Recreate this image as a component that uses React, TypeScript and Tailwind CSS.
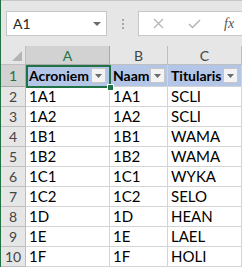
import React from "react";

const rows: [string, string, string][] = [
  ["1A1", "1A1", "SCLI"],
  ["1A2", "1A2", "SCLI"],
  ["1B1", "1B1", "WAMA"],
  ["1B2", "1B2", "WAMA"],
  ["1C1", "1C1", "WYKA"],
  ["1C2", "1C2", "SELO"],
  ["1D", "1D", "HEAN"],
  ["1E", "1E", "LAEL"],
  ["1F", "1F", "HOLI"],
];

function FilterBtn() {
  return (
    <div className="w-[15px] h-[15px] bg-[#f3f3f3] border border-[#c6c6c6] flex items-center justify-center shrink-0">
      <svg width="7" height="4" viewBox="0 0 7 4">
        <path d="M0 0 L7 0 L3.5 4 Z" fill="#6b6b6b" />
      </svg>
    </div>
  );
}

export default function App() {
  return (
    <div className="w-[242px] h-[267px] overflow-hidden flex bg-[#e6e6e6] font-['Lato',sans-serif] text-[15px] text-black">
      <div className="w-[1px] bg-[#217346] shrink-0" />
      <div className="flex-1 flex flex-col min-w-0">
        {/* top bar */}
        <div className="h-[46px] shrink-0 border-t border-[#c6c6c6] flex items-start pt-[10px]">
          <div className="ml-[5px] w-[101px] h-[25px] bg-white border border-[#c6c6c6] flex items-center justify-between pl-[6px] pr-[5px]">
            <span className="text-[14px] text-[#262626] font-['Lato',sans-serif]">A1</span>
            <svg width="8" height="4" viewBox="0 0 8 4">
              <path d="M0 0 L8 0 L4 4 Z" fill="#6b6b6b" />
            </svg>
          </div>
          <div className="w-[31px] h-[25px] flex flex-col items-center justify-center gap-[2px]">
            <div className="w-[2px] h-[2px] bg-[#a8a8a8]" />
            <div className="w-[2px] h-[2px] bg-[#a8a8a8]" />
            <div className="w-[2px] h-[2px] bg-[#a8a8a8]" />
          </div>
          <div className="flex-1 h-[25px] bg-white border border-[#c6c6c6] border-r-0 flex items-center">
            <svg className="ml-[14px]" width="11" height="11" viewBox="0 0 11 11">
              <path d="M1 1 L10 10 M10 1 L1 10" stroke="#b5b5b5" strokeWidth="1.3" />
            </svg>
            <svg className="ml-[24px]" width="13" height="10" viewBox="0 0 13 10">
              <path d="M1 5 L4.5 8.5 L12 1" stroke="#b5b5b5" strokeWidth="1.5" fill="none" />
            </svg>
            <span className="ml-[23px] text-[14px] italic text-[#555] font-['Liberation_Serif',serif]">fx</span>
          </div>
        </div>

        {/* grid */}
        <div className="relative grid grid-cols-[25px_84px_58px_74px] grid-rows-[19px_22px_repeat(9,20px)] bg-white">
          {/* corner */}
          <div className="bg-[#e6e6e6] border-r border-b border-[#bfbfbf] flex items-end justify-end p-[3px]">
            <svg width="10" height="10" viewBox="0 0 10 10">
              <path d="M10 0 L10 10 L0 10 Z" fill="#b4b4b4" />
            </svg>
          </div>
          <div className="bg-[#d2d2d2] border-r border-b border-[#ababab] flex items-center justify-center text-[14px] text-[#217346]">A</div>
          <div className="bg-[#e6e6e6] border-r border-b border-[#bfbfbf] flex items-center justify-center text-[14px] text-[#444]">B</div>
          <div className="bg-[#e6e6e6] border-r border-b border-[#bfbfbf] flex items-center justify-center text-[14px] text-[#444]">C</div>

          {/* header row 1 */}
          <div className="bg-[#d2d2d2] border-r border-b border-[#ababab] flex items-center justify-center text-[14px] text-[#217346]">1</div>
          <div className="bg-[#b4c6e7] border-r border-b border-[#d4d4d4] flex items-center justify-between pl-[3px] pr-[3px] font-bold text-[14px]">
            <span>Acroniem</span>
            <FilterBtn />
          </div>
          <div className="bg-[#b4c6e7] border-r border-b border-[#d4d4d4] flex items-center justify-between pl-[3px] pr-[2px] font-bold text-[14px]">
            <span>Naam</span>
            <FilterBtn />
          </div>
          <div className="bg-[#b4c6e7] border-r border-b border-[#d4d4d4] flex items-center justify-between pl-[3px] pr-[3px] font-bold text-[14px]">
            <span>Titularis</span>
            <FilterBtn />
          </div>

          {rows.map((r, i) => (
            <React.Fragment key={i}>
              <div className="bg-[#e6e6e6] border-r border-b border-[#bfbfbf] flex items-center justify-center text-[14px] text-[#444]">
                {i + 2}
              </div>
              {r.map((c, j) => (
                <div key={j} className="border-r border-b border-[#d4d4d4] flex items-center pl-[3px] leading-none">
                  {c}
                </div>
              ))}
            </React.Fragment>
          ))}

          {/* selection */}
          <div className="absolute left-[25px] top-[19px] w-[85px] h-[23px] border-2 border-[#217346] pointer-events-none" />
          <div className="absolute left-[106px] top-[38px] w-[7px] h-[7px] bg-[#217346] border border-white" />
        </div>
      </div>
    </div>
  );
}
